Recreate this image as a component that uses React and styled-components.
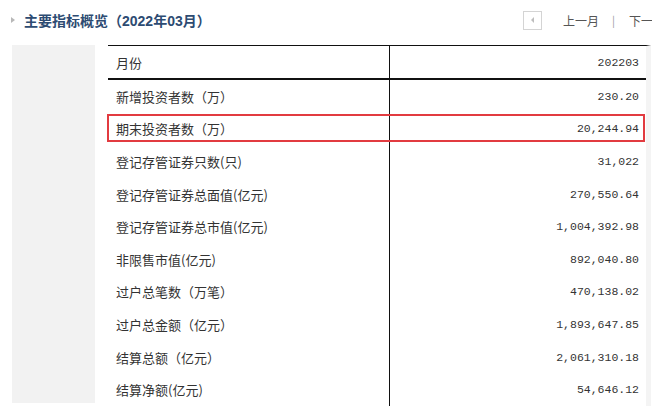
import React from 'react';
import styled, { createGlobalStyle } from 'styled-components';

const Global = createGlobalStyle`
  html, body {
    margin: 0;
    padding: 0;
    background: #fff;
    font-family: "Liberation Sans", "Noto Sans CJK SC", sans-serif;
  }
`;

/* whole module, clipped at the right edge like the source page */
const Page = styled.div`
  width: 652px;
  height: 413px;
  overflow: hidden;
`;

const TitleBar = styled.div`
  display: flex;
  align-items: center;
  height: 40px;
  padding-left: 11px;
`;

const Bullet = styled.span`
  width: 0;
  height: 0;
  border-top: 3px solid transparent;
  border-bottom: 3px solid transparent;
  border-left: 4px solid #b8b8b8;
  margin-right: 9px;
`;

const Title = styled.h2`
  margin: 0;
  font-size: 14px;
  font-weight: bold;
  color: #2d4b72;
  font-family: "Liberation Sans", "Noto Sans CJK SC", sans-serif;
  white-space: nowrap;
`;

const Nav = styled.div`
  margin-left: auto;
  display: flex;
  align-items: center;
  white-space: nowrap;
  font-size: 12px;
  color: #555;
  font-family: "Noto Sans CJK SC", sans-serif;
  margin-right: -13px;
`;

const PrevBox = styled.span`
  box-sizing: border-box;
  width: 19px;
  height: 19px;
  border: 1px solid #d4d4d4;
  display: flex;
  align-items: center;
  justify-content: center;
  margin-right: 21px;

  &::before {
    content: '';
    border-top: 3px solid transparent;
    border-bottom: 3px solid transparent;
    border-right: 3px solid #bdbdbd;
  }
`;

const NavLink = styled.span`
  cursor: pointer;
`;

const Sep = styled.span`
  margin: 0 14px 0 13px;
  color: #999;
  font-size: 11px;
`;

const Body = styled.div`
  display: flex;
  align-items: flex-start;
  margin-top: 5px;
`;

const SidePanel = styled.div`
  width: 83px;
  height: 358px;
  margin-left: 12px;
  margin-right: 13px;
  background: #f2f2f2;
`;

const Table = styled.div`
  width: 538px;
  border-top: 1px solid #111;
  border-right: 5px solid #f4f4f4;
  box-sizing: content-box;
`;

const Row = styled.div`
  position: relative;
  display: grid;
  grid-template-columns: 281px 1fr;
  height: ${p => (p.$head ? '32px' : '32.6px')};
  border-bottom: ${p => (p.$head ? '2px solid #111' : 'none')};
`;

const Label = styled.div`
  display: flex;
  align-items: center;
  padding-left: 8px;
  font-size: 13px;
  color: #333;
  font-family: "Noto Sans CJK SC", sans-serif;
  white-space: nowrap;
`;

const Value = styled.div`
  display: flex;
  align-items: center;
  justify-content: flex-end;
  padding-right: 7px;
  border-left: 1.5px solid #111;
  font-size: 11.5px;
  color: #333;
  font-family: "Liberation Mono", monospace;
`;

/* red annotation frame drawn over one row */
const Highlight = styled.div`
  position: absolute;
  left: -1px;
  right: 1px;
  top: 1px;
  bottom: 3px;
  border: 2px solid #e23b40;
  pointer-events: none;
`;

const rows = [
  ['新增投资者数（万）', '230.20'],
  ['期末投资者数（万）', '20,244.94', true],
  ['登记存管证券只数(只)', '31,022'],
  ['登记存管证券总面值(亿元)', '270,550.64'],
  ['登记存管证券总市值(亿元)', '1,004,392.98'],
  ['非限售市值(亿元)', '892,040.80'],
  ['过户总笔数（万笔）', '470,138.02'],
  ['过户总金额（亿元）', '1,893,647.85'],
  ['结算总额（亿元）', '2,061,310.18'],
  ['结算净额(亿元)', '54,646.12'],
];

export default function App() {
  return (
    <Page>
      <Global />
      <TitleBar>
        <Bullet />
        <Title>主要指标概览（2022年03月）</Title>
        <Nav>
          <PrevBox />
          <NavLink>上一月</NavLink>
          <Sep>|</Sep>
          <NavLink>下一月</NavLink>
        </Nav>
      </TitleBar>
      <Body>
        <SidePanel />
        <Table>
          <Row $head>
            <Label>月份</Label>
            <Value>202203</Value>
          </Row>
          {rows.map(([label, value, marked]) => (
            <Row key={label}>
              <Label>{label}</Label>
              <Value>{value}</Value>
              {marked && <Highlight />}
            </Row>
          ))}
        </Table>
      </Body>
    </Page>
  );
}
